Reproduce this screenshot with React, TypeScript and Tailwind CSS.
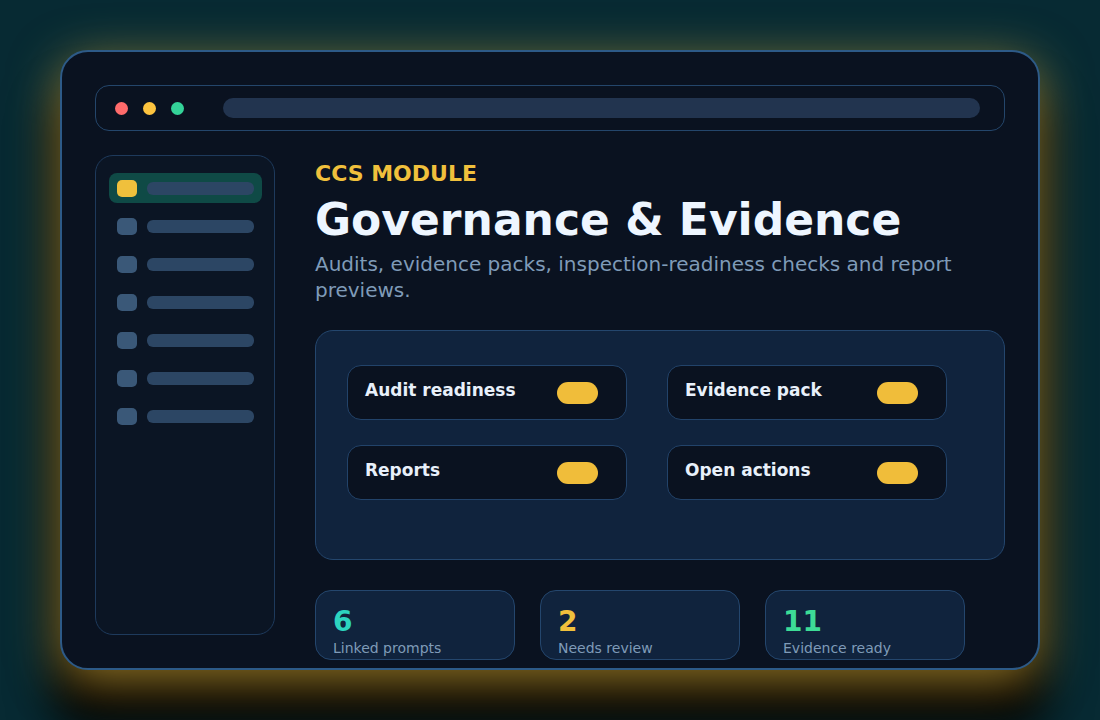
const navRows = [true, false, false, false, false, false, false];

const checks = ["Audit readiness", "Evidence pack", "Reports", "Open actions"];

const stats = [
  { value: "6", label: "Linked prompts", color: "text-[#2dd4bf]" },
  { value: "2", label: "Needs review", color: "text-[#f0c03c]" },
  { value: "11", label: "Evidence ready", color: "text-[#3ddc97]" },
];

export default function App() {
  return (
    <div className="h-[720px] w-[1100px] overflow-hidden bg-[#072a33] px-[60px] pt-[50px] font-['DejaVu_Sans',sans-serif]">
      <div className="h-[620px] rounded-[28px] border-2 border-[#2d5a87] bg-[#0a1220] p-[33px] shadow-[0_12px_50px_rgba(240,190,60,0.6),0_50px_40px_10px_rgba(0,0,0,1)]">
        {/* window chrome */}
        <div className="flex h-[46px] items-center rounded-[14px] border border-[#24466b] pl-[19px] pr-[24px]">
          <div className="flex gap-[15px]">
            <span className="size-[13px] rounded-full bg-[#ff6b6b]" />
            <span className="size-[13px] rounded-full bg-[#fdc43f]" />
            <span className="size-[13px] rounded-full bg-[#34d399]" />
          </div>
          <div className="ml-[39px] h-5 flex-1 rounded-full bg-[#22344f]" />
        </div>

        <div className="mt-6 flex gap-10">
          <aside className="flex h-[480px] w-[180px] shrink-0 flex-col gap-2 rounded-[18px] border border-[#1e3a5c] bg-[#0b1524] pl-[13px] pr-[12px] pt-[17px]">
            {navRows.map((active, i) => (
              <div
                key={i}
                className={`flex h-[30px] items-center gap-2.5 rounded-lg px-2 ${active ? "bg-[#0f4a46]" : ""}`}
              >
                <span className={`h-[17px] w-5 rounded-[5px] ${active ? "bg-[#f0c03c]" : "bg-[#3a5878]"}`} />
                <span className="h-[13px] flex-1 rounded-md bg-[#2c4664]" />
              </div>
            ))}
          </aside>

          <main className="flex-1">
            <p className="mt-[5px] text-[22px] font-bold leading-[28px] text-[#f0c03c]">CCS MODULE</p>
            <h1 className="mt-1.5 text-[44px] font-bold leading-[52px] text-[#eef6ff]">Governance &amp; Evidence</h1>
            <p className="mt-[5px] text-[20px] leading-[26px] text-[#7f9bb8]">
              Audits, evidence packs, inspection-readiness checks and report previews.
            </p>

            <div className="mt-[27px] h-[230px] rounded-[18px] border border-[#24466d] bg-[#10233d] pl-[31px] pt-[34px]">
              <div className="grid grid-cols-[280px_280px] gap-x-10 gap-y-[25px]">
                {checks.map((c) => (
                  <div
                    key={c}
                    className="flex h-[55px] items-center justify-between rounded-[14px] border border-[#22436a] bg-[#0a1220] pl-[17px] pr-[28px]"
                  >
                    <span className="pb-1 text-[17px] font-bold text-[#e8f0fa]">{c}</span>
                    <span className="h-[22px] w-[41px] rounded-full bg-[#f0bd3a]" />
                  </div>
                ))}
              </div>
            </div>

            <div className="mt-[30px] flex gap-[25px]">
              {stats.map((s) => (
                <div
                  key={s.label}
                  className="h-[70px] w-[200px] rounded-2xl border border-[#24466d] bg-[#10233d] pl-[17px] pt-[15px]"
                >
                  <div className={`text-[28px] font-bold leading-8 ${s.color}`}>{s.value}</div>
                  <div className="text-sm leading-5 text-[#7f9bb8]">{s.label}</div>
                </div>
              ))}
            </div>
          </main>
        </div>
      </div>
    </div>
  );
}
